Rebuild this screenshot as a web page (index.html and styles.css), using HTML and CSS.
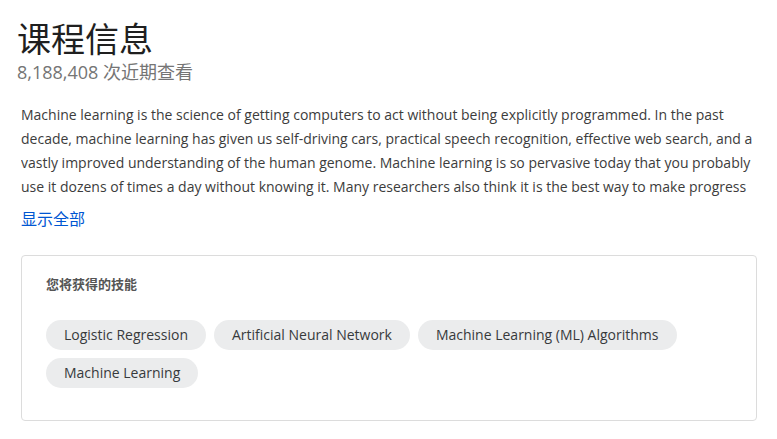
FILE: index.html
```html
<!DOCTYPE html>
<html lang="zh">
<head>
<meta charset="utf-8">
<link rel="stylesheet" href="styles.css">
</head>
<body>
<main class="page">
  <h1 class="title">课程信息</h1>
  <div class="views">8,188,408 次近期查看</div>
  <p class="desc">Machine learning is the science of getting computers to act without being explicitly programmed. In the past decade, machine learning has given us self-driving cars, practical speech recognition, effective web search, and a vastly improved understanding of the human genome. Machine learning is so pervasive today that you probably use it dozens of times a day without knowing it. Many researchers also think it is the best way to make progress</p>
  <a class="more" href="#">显示全部</a>
  <section class="card">
    <h2 class="card-title">您将获得的技能</h2>
    <div class="chips">
      <span class="chip">Logistic Regression</span>
      <span class="chip">Artificial Neural Network</span>
      <span class="chip">Machine Learning (ML) Algorithms</span>
      <span class="chip">Machine Learning</span>
    </div>
  </section>
</main>
</body>
</html>
```
FILE: styles.css
```css
html, body { margin: 0; padding: 0; background: #fff; }
body { font-family: "Open Sans", "Noto Sans CJK SC", sans-serif; color: #333; }
.page { padding: 17px 20px 0 21px; width: 736px; }
.title { margin: 0 0 0 -4px; font-size: 34px; font-weight: 400; line-height: 44px; color: #1f1f1f; }
.views { margin: 0 0 0 -4px; font-size: 18px; line-height: 22px; color: #757575; }
.desc { margin: 20px 0 0; font-size: 14px; line-height: 24px; color: #3c3c3c; max-height: 96px; overflow: hidden; }
.more { display: block; margin-top: 9px; font-size: 16px; line-height: 22px; color: #0056d2; text-decoration: none; }
.card { margin-top: 25px; border: 1px solid #dcdcdc; border-radius: 4px; padding: 19px 24px 32px; }
.card-title { margin: 0; font-size: 13px; font-weight: 700; line-height: 18px; color: #555; }
.chips { display: flex; flex-wrap: wrap; gap: 8px; margin-top: 27px; }
.chip { background: #ebeced; border-radius: 15px; height: 30px; line-height: 30px; padding: 0 18px; font-size: 14px; color: #373a3c; }
```
